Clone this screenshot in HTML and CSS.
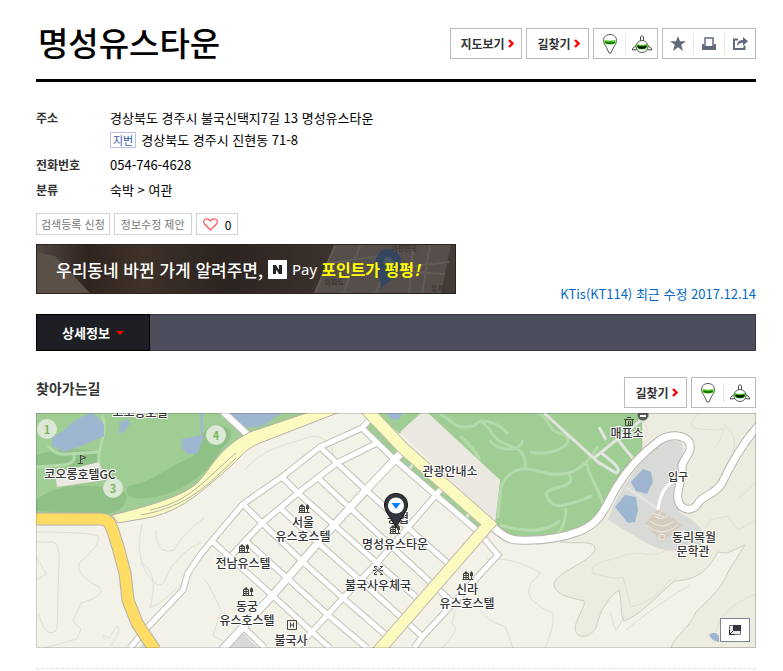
FILE: index.html
```html
<!DOCTYPE html>
<html lang="ko">
<head>
    <meta charset="UTF-8">
    <title>명성유스타운</title>
    <link rel="stylesheet" href="styles.css">
</head>
<body>
    <svg class="sprite" aria-hidden="true">
        <symbol id="arrow" viewBox="0 0 6 9">
            <path d="M1 1l3.5 3.5L1 8" fill="none" stroke="#f00" stroke-width="2.4"/>
        </symbol>
        <symbol id="street" viewBox="0 0 14 20">
            <path d="M7 .5C3 .5.5 3 .5 6.500c0 3 1.700 4.500 3 7L6 19h2l2.500-5.500c1.300-2.500 3-4 3-7C13.500 3 11 .5 7 .5z" fill="#fff" stroke="#555"/>
            <path d="M1.500 6q5.500 1.500 11 0v3.500q-5.500 2-11 0z" fill="#41c413"/>
            <path d="M2.500 8q4.500 1 9 0v1q-4.500 1.500-9 0z" fill="#0a3d05"/>
        </symbol>
        <symbol id="heli" viewBox="0 0 20 18">
            <path d="M8.500 6V2q1.500-3 3 0v4M5 10L.5 13.500V15l5-.5M15 10l4.500 3.500V15l-5-.5" fill="#fff" stroke="#444"/>
            <circle cx="10" cy="11.500" r="6" fill="#fff" stroke="#555"/>
            <path d="M4.500 9q5.500 2 11 0v3q-1 2.500-5.500 2.500t-5.500-2.500z" fill="#41c413"/>
            <path d="M5.500 10.500q4.500 1.500 9 0v1.500q-1 2-4.500 2t-4.500-2z" fill="#021a00"/>
        </symbol>
        <symbol id="hotel" viewBox="0 0 12 10">
            <path d="M.5 9.500h11M1.500 9V3.500h5V9M4 1v8M1.500 5.500h5M1.500 7.500h5M9.500 9V5" fill="none" stroke="#444"/>
            <path d="M2.500 2h3v1.500h-3zM8 3l1.500-2L11 3v3H8z" fill="#444"/>
        </symbol>
    </svg>

    <div class="wrap">
        <header class="head">
            <h1>명성유스타운</h1>
            <div class="actions">
                <button class="btn map-btn">지도보기<svg width="6" height="9"><use href="#arrow"/></svg></button>
                <button class="btn">길찾기<svg width="6" height="9"><use href="#arrow"/></svg></button>
                <div class="group">
                    <button aria-label="거리뷰"><svg width="14" height="20"><use href="#street"/></svg></button>
                    <button aria-label="항공뷰"><svg width="20" height="18"><use href="#heli"/></svg></button>
                </div>
                <div class="group tools">
                    <button aria-label="즐겨찾기">
                        <svg width="16" height="15" viewBox="0 0 16 15"><path d="M8 0l2 5.300h6l-4.800 3.400L13 15l-5-3.700L3 15l1.800-6.300L0 5.300h6z" fill="#62697c"/></svg>
                    </button>
                    <button aria-label="인쇄">
                        <svg width="14" height="13" viewBox="0 0 14 13"><path d="M3 9V1h8v8" fill="#fff" stroke="#62697c" stroke-width="1.500"/><path d="M0 7h2v2h10V7h2v6H0z" fill="#62697c"/></svg>
                    </button>
                    <button aria-label="공유">
                        <svg width="15" height="13" viewBox="0 0 15 13"><path d="M5 2.500H1V12h10.500V8.500" fill="none" stroke="#62697c" stroke-width="2"/><path d="M4 9c0-4 2-6 6-6V0l5 4.300-5 4.200V5.800C7.500 5.700 6 6.500 4 9z" fill="#62697c"/></svg>
                    </button>
                </div>
            </div>
        </header>

        <dl class="info">
            <dt>주소</dt>
            <dd>경상북도 경주시 불국신택지7길 13 명성유스타운<br><span class="jibun">지번</span>경상북도 경주시 진현동 71-8</dd>
            <dt>전화번호</dt>
            <dd>054-746-4628</dd>
            <dt>분류</dt>
            <dd>숙박 &gt; 여관</dd>
        </dl>

        <div class="links">
            <button>검색등록 신청</button>
            <button>정보수정 제안</button>
            <button class="like" aria-label="좋아요 0">
                <svg width="15" height="13" viewBox="0 0 15 13"><path d="M7.500 12L1.500 6C-.5 3 1.500 .8 3.800.8c1.700 0 2.700.7 3.700 2.200C8.500 1.500 9.500.8 11.200.8c2.300 0 4.300 2.200 2.300 5.200z" fill="none" stroke="#f55" stroke-width="1.200"/></svg>
                <span>0</span>
            </button>
        </div>

        <div class="promo">
            <a class="banner" href="#">
                <svg class="banner-bg" viewBox="0 0 420 50" preserveAspectRatio="xMaxYMid slice" aria-hidden="true">
                    <defs>
                        <linearGradient id="wood">
                            <stop offset="0" stop-color="#514740"/>
                            <stop offset=".12" stop-color="#30241f"/>
                            <stop offset=".25" stop-color="#3e3128"/>
                            <stop offset=".45" stop-color="#2c2421"/>
                            <stop offset=".7" stop-color="#3c322e"/>
                            <stop offset="1" stop-color="#443a36"/>
                        </linearGradient>
                    </defs>
                    <path d="M0 0h420v50H0z" fill="url(#wood)"/>
                    <path d="M0 8l18 4 36 38H0z" fill="#5a5048"/>
                    <path d="M300 0h116l-10 50H279z" fill="#564e4b"/>
                    <path d="M300 0l-21 50M290 20l54-8 20 12 50-6M325 0l-17 50M340 50l10-24 60 4M378 0l-4 50M395 0l-8 50" fill="none" stroke="#625a57" stroke-width="2"/>
                    <path d="M353 5a14 14 0 0 1 13 17c-2 9-11 14-20 22 0-10-8-15-6-26 1-8 6-13 13-13z" fill="#34465f"/>
                    <circle cx="353" cy="18" r="5" fill="#4d5663"/>
                    <g class="banner-place">
                        <text x="356" y="7">가전면옥</text>
                        <text x="289" y="41">아파트</text>
                        <text x="396" y="47">유치</text>
                    </g>
                </svg>
                <span>우리동네 바뀐 가게 알려주면,</span>
                <svg class="naver" width="19" height="19" viewBox="0 0 19 19"><path d="M0 0h19v19H0z" fill="#fff"/><path d="M5 14V5h3l3 5V5h3v9h-3L8 9.500V14z" fill="#222"/></svg>
                <span class="pay">Pay</span>
                <strong>포인트가 펑펑<i>!</i></strong>
            </a>
            <a class="updated" href="#">KTis(KT114) 최근 수정 2017.12.14</a>
        </div>

        <nav class="tabs">
            <a href="#">상세정보<span class="caret"></span></a>
        </nav>

        <section>
            <div class="section-head">
                <h2>찾아가는길</h2>
                <div class="actions">
                    <button class="btn">길찾기<svg width="6" height="9"><use href="#arrow"/></svg></button>
                    <div class="group">
                        <button aria-label="거리뷰"><svg width="14" height="20"><use href="#street"/></svg></button>
                        <button aria-label="항공뷰"><svg width="20" height="18"><use href="#heli"/></svg></button>
                    </div>
                </div>
            </div>

            <div class="map">
                <svg class="map-canvas" viewBox="36 413 720 235" preserveAspectRatio="xMidYMid slice">
                    <defs>
                        <g id="streets">
                            <path d="M130 648L145 630 183 590 188 573 200 555 243 504 282 477 320 447 362 428 372 417"/>
                            <path d="M377 443L337 463 298 493 262 523 232 555"/>
                            <path d="M442 488L377 563 343 598 297 648"/>
                            <path d="M482 536L498 555 422 637 414 648"/>
                            <path d="M362 428L395 460 438 497 480 533"/>
                            <path d="M320 447L337 463 366 490 407 527 450 565"/>
                            <path d="M318 478L350 508 403 557 452 602"/>
                            <path d="M282 477L298 493 332 523 377 563 416 597"/>
                            <path d="M280 508L318 543 360 580 423 637"/>
                            <path d="M243 504L262 523 303 562 343 598 387 636"/>
                            <path d="M247 542L287 578 328 615 367 648"/>
                            <path d="M213 542L272 595 312 632 330 648"/>
                            <path d="M243 627L265 648"/>
                        </g>
                        <path id="avenue" d="M402 452L366 490 318 543 272 596 243 627 222 650"/>
                        <path id="hillroad" d="M490 526C498 529 504 540 518 540C540 541 560 539 580 531C602 522 606 505 616 488C628 468 645 451 660 440C670 434 683 434 689 442C694 452 682 460 682 466C684 476 676 490 678 499C680 512 694 512 699 502C704 495 716 494 722 483C732 462 742 444 758 426"/>
                        <path id="highway" d="M30 519H100C112 519 111 527 118 547L125 573 128 600 137 623 155 650"/>
                    </defs>

                    <!-- ground -->
                    <path class="land" d="M36 413h720v235H36z"/>
                    <path class="hill" d="M642 413H756V648H671C674 636 690 628 696 612C710 598 722 588 728 572L745 545 727 553 718 552C706 574 694 580 674 581C654 599 640 615 624 621C620 615 622 600 619 590C608 598 600 610 596 628C588 640 575 638 575 628C577 616 586 606 584 601C570 597 555 596 554 584C555 573 590 562 595 550C595 540 584 544 560 542L600 515 642 458z"/>

                    <!-- contour lines -->
                    <path class="contour" d="M36 532q60 0 63 5q0 10-20 26q-4 12 20 24q8 8-18 16l-8 18 8 8-4 10-36 10M36 542h18q6 4 5 20l-2 68q-12 10-18-16M36 556l10 18-10 6M142 524q-8 38 10 56q10 12 15-5q12-24 34-32M156 530q0 26 18 20q10-18 30-32M140 562q20 10 10 46q18-8 38-32M205 580q6 8 16 30l-8 26 12 6M105 640q-6-8 4-2l8-12q6 0-6 20M245 470q14-20 56-30q20-10 31 8q0 20 30 36"/>
                    <path class="contour" d="M487 559q28-2 54 14q-18 14-10 26q10 10 22 14q2 12-8 35M480 610q10 14 25 16l8 22M593 573q-6-8 20-14q14-6 26-6q24 6 34-10M593 573q25 8 30 4l8 30q22-4 40-28M624 617l-8 14-6-18M690 585q-34 20-64 45M700 413q-26 20 24 16q-4 14-10 20M724 424q16 14 8 30l-10 20M738 498q20-14 18-22M700 540l10-20 18-4 10 14 18-10M715 640q0-30 41-46M640 413q10 18 6 24M442 648q20-20 10-24l3-14"/>

                    <!-- golf course -->
                    <path class="green" d="M36 413H330L250 441 222 465C198 492 178 496 150 507L118 516 36 514z"/>
                    <path class="green-dark" d="M36 500C65 478 100 486 125 492C130 506 118 514 98 514L36 511zM128 486C150 484 168 466 190 458C204 452 196 428 216 425C236 426 234 438 222 448C200 486 165 500 134 498C126 496 126 490 128 486zM36 455C60 448 80 448 98 452L100 464 84 466 36 468z"/>
                    <path class="path-light" d="M102 415C110 432 96 446 99 465M48 446q8 10 20 8l32-2M36 467l28-2q12-2 10-10"/>
                    <path class="water" d="M76 420L92 412 104 424 104 436 86 444 64 452 52 446 52 438 64 430zM120 422l8-3 2 5-6 8-5 1zM200 413h3l0 27-6 14-10 0-6-7 1-8 19-4zM228 413H282L262 426 244 428z"/>
                    <path class="plaza" d="M55 473L99 462 105 480 57 487z"/>
                    <path class="walk-edge" d="M218 407L250 437"/>
                    <path class="walk" d="M218 407L250 437"/>

                    <!-- parks and car park -->
                    <path class="green" d="M369 421L487 526 478 531 365 430zM374 413H422L400 434zM426 413H642V458C622 480 610 508 595 520C570 538 540 540 515 538L494 524 500 480z"/>
                    <path class="water" d="M386 413h17l-4 6-6 1z"/>
                    <path class="plaza" d="M421 413H428L500 480 495 524 400 432z"/>
                    <path class="path-light" d="M498 518C500 490 500 480 512 473C528 462 540 476 560 474C578 474 590 460 598 446M525 468C528 440 500 452 490 430L480 420M440 414C456 422 452 430 474 426C482 416 500 424 508 434M490 440C498 454 525 450 522 440M530 452C556 458 580 440 562 434C546 430 552 420 538 413M587 464C590 480 600 490 603 504M568 472C580 490 550 484 546 494C552 514 570 504 592 496M566 508C566 520 562 530 556 536M460 436q14 12 20 24M500 525q40 12 60-4"/>
                    <path class="lane" d="M544 413L598 462 616 473C622 470 616 464 600 452M594 458L650 413M599 427L606 440M618 440L636 462M409 469l5-6M465 519l5-6"/>

                    <!-- museum grounds -->
                    <path class="grounds" d="M682 443C672 436 660 442 648 456C632 472 616 496 608 520L646 543C664 552 690 556 702 544C706 530 698 522 680 513C672 500 680 476 684 462z"/>
                    <path class="water" d="M631 482L643 469 651 472 653 482 647 494 636 491zM615 507L625 495 636 497 638 510 635 522 628 523z"/>
                    <path class="museum" d="M658 508L682 525 662 542 645 524z"/>
                    <path class="museum-steps" d="M650 521q12 10 24 0M646 525q16 14 32 0M654 516q6 5 14 0M652 513l12 4M662 510l-6 8"/>
                    <circle class="museum-steps" cx="662" cy="537" r="3"/>
                    <path class="lane" d="M626 487L658 509"/>
                    <path class="walk thin" d="M658 510Q660 490 672 482"/>
                    <path class="water" d="M709 635q6-5 10 1v6q-6 0-10-7z"/>
                    <path class="grounds" d="M243 633L258 648H228zM140 648l4-8 6 8z"/>

                    <!-- streets -->
                    <use class="street-edge" href="#streets"/>
                    <use class="avenue-edge" href="#avenue"/>
                    <use class="street" href="#streets"/>
                    <use class="avenue" href="#avenue"/>
                    <use class="hill-edge" href="#hillroad"/>
                    <use class="hill-road" href="#hillroad"/>

                    <!-- main roads -->
                    <path class="main" d="M112 515C150 506 185 495 197 483C212 468 218 448 250 432L330 405 345 410 260 443C245 449 240 458 230 467L203 490C190 501 170 514 147 518L118 523z"/>
                    <path class="main-lane" d="M150 510C190 502 204 480 236 453M141 515C190 506 208 484 236 458"/>
                    <path class="trunk-edge" d="M364 407L403 448 489 524 374 656"/>
                    <path class="trunk" d="M364 407L403 448 489 524 374 656"/>
                    <use class="highway-edge" href="#highway"/>
                    <use class="highway" href="#highway"/>

                    <!-- golf holes -->
                    <g class="hole">
                        <circle cx="47" cy="429" r="10"/><text x="47" y="434">1</text>
                        <circle cx="216" cy="435" r="10"/><text x="216" y="440">4</text>
                        <circle cx="113" cy="488" r="10"/><text x="113" y="493">3</text>
                    </g>

                    <!-- place icons -->
                    <use href="#hotel" x="298" y="503" width="12" height="10"/>
                    <use href="#hotel" x="238" y="543" width="12" height="10"/>
                    <use href="#hotel" x="242" y="586" width="12" height="10"/>
                    <use href="#hotel" x="462" y="570" width="12" height="10"/>
                    <use href="#hotel" x="389" y="524" width="12" height="10"/>
                    <path class="mark" d="M80.500 463v-8M81 455.500l5 2-5 2M78 463.500h5M374 567l8 7M382 567l-8 7M374 566.500h3M380 566.500h3M374 574.500h3M380 574.500h3M373 570.500h3M380 570.500h3M287.500 620.500h9v9h-9zM290.500 622.500v5M293.500 622.500v5M290.500 625h3M624 419.500h10M625.500 420v5.500h7V420M627 417.500h4M628.500 421v4M630.500 421v4"/>
                    <circle cx="643" cy="415" r="5.500" fill="#555f57"/>
                    <path d="M640 416h6" stroke="#fff" stroke-width="2"/>

                    <g class="place">
                        <text x="140" y="417">코오롱호텔</text>
                        <text x="80" y="479">코오롱호텔GC</text>
                        <text x="627" y="438">매표소</text>
                        <text x="450" y="476">관광안내소</text>
                        <text x="678" y="481" class="small">입구</text>
                        <text x="694" y="542">동리목월</text>
                        <text x="693" y="556">문학관</text>
                        <text x="303" y="527">서울</text>
                        <text x="303" y="541">유스호스텔</text>
                        <text x="243" y="568">전남유스텔</text>
                        <text x="247" y="611">동궁</text>
                        <text x="247" y="625">유스호스텔</text>
                        <text x="291" y="645">불국사</text>
                        <text x="378" y="590">불국사우체국</text>
                        <text x="467" y="594">신라</text>
                        <text x="467" y="608">유스호스텔</text>
                        <text x="398" y="523">농협</text>
                        <text x="395" y="549">명성유스타운</text>
                    </g>

                    <!-- marker -->
                    <path d="M396 493.500c-7 0-11.500 5-11.500 11.500 0 7 7 13 11.500 23 4.500-10 11.500-16 11.500-23 0-6.500-4.500-11.500-11.500-11.500z" fill="#33373b" stroke="#111"/>
                    <circle cx="396" cy="505.500" r="8" fill="#fff"/>
                    <path d="M391.500 503h9l-4.500 6z" fill="#0b80ff"/>
                </svg>
                <button class="map-toggle" aria-label="미니맵">
                    <svg width="12" height="10" viewBox="0 0 12 10"><path d="M.5.5h11v9H.5z" fill="#e8eaee" stroke="#777d88"/><path d="M4 0h8v6H4z" fill="#33363d"/><path d="M.5 5v4.500h5M1 9l3-3" fill="none" stroke="#222"/></svg>
                </button>
            </div>
        </section>
    </div>
</body>
</html>
```

FILE: styles.css
```css
* {
    box-sizing: border-box;
}
body {
    margin: 0;
    background: #fff;
    color: #000;
    font-family: "Noto Sans CJK KR", sans-serif;
    font-size: 13px;
}
button {
    margin: 0;
    padding: 0;
    border: none;
    background: none;
    color: inherit;
    font-family: inherit;
    cursor: pointer;
}
a {
    text-decoration: none;
}
.sprite {
    position: absolute;
    width: 0;
    height: 0;
}
.wrap {
    margin: 0 27px 0 36px;
}

/* title */
.head {
    display: flex;
    justify-content: space-between;
    padding: 28px 0 20px;
    border-bottom: 3px solid #000;
}
h1 {
    margin: 0 0 0 2px;
    font-size: 33px;
    font-weight: 500;
    line-height: 28px;
}
.actions {
    display: flex;
    gap: 4px;
}
.btn, .group {
    display: flex;
    align-items: center;
    justify-content: center;
    width: 63px;
    height: 31px;
    border: 1px solid #bbb;
    background: #fff;
}
.btn {
    gap: 3px;
    padding-left: 2px;
    color: #333;
    font-size: 12px;
    font-weight: bold;
}
.map-btn {
    width: 72px;
}
.group {
    width: 65px;
}
.tools {
    width: 94px;
}
.group button {
    display: flex;
    flex: 1;
    align-items: center;
    justify-content: center;
    height: 20px;
}
.group button + button {
    border-left: 1px solid #e8e8e8;
}

/* place info */
.info {
    display: grid;
    grid-template-columns: 74px 1fr;
    row-gap: 3px;
    margin: 25px 0 12px;
    line-height: 22px;
}
.info dt {
    color: #333;
    font-size: 12px;
    font-weight: bold;
}
.info dd {
    margin: 0;
}
.jibun {
    display: inline-block;
    margin-right: 5px;
    padding: 0 2px;
    border: 1px solid #b4c1e0;
    color: #3a5ba8;
    font-size: 11px;
    line-height: 14px;
}
.links {
    display: flex;
    gap: 4px;
    margin-bottom: 9px;
}
.links button {
    display: flex;
    align-items: center;
    height: 22px;
    padding: 0 4px;
    border: 1px solid #d2d2d2;
    color: #777;
    font-size: 11px;
}
.links button + button {
    padding: 0 6px;
}
.links .like {
    gap: 7px;
    color: #000;
    font-size: 12px;
}

/* banner */
.promo {
    display: flex;
    align-items: flex-start;
    justify-content: space-between;
}
.banner {
    position: relative;
    display: flex;
    align-items: center;
    width: 420px;
    height: 50px;
    padding-left: 20px;
    color: #fff;
    font-size: 17px;
    font-weight: 500;
    white-space: nowrap;
}
.banner span, .banner strong, .naver {
    position: relative;
}
.banner-bg {
    position: absolute;
    top: 0;
    left: 0;
    width: 100%;
    height: 100%;
    border: 1px solid #282321;
}
.banner-place {
    fill: #36302d;
    font-size: 7px;
}
.naver {
    margin: 0 5px;
}
.banner .pay {
    margin-right: 4px;
    font-family: "Noto Sans", sans-serif;
    font-size: 15px;
    font-weight: normal;
}
.banner strong {
    color: #ff0;
    font-size: 16px;
}
.updated {
    margin-top: 42px;
    color: #0468c6;
    font-size: 13px;
    line-height: 16px;
}

/* tabs */
.tabs {
    display: flex;
    height: 37px;
    margin-top: 20px;
    border: 1px solid #363843;
    background: #4b4d5a;
}
.promo {
    height: 50px;
}
.tabs a {
    display: flex;
    align-items: center;
    justify-content: center;
    gap: 6px;
    width: 114px;
    margin: -1px;
    border: 1px solid #000;
    background: #1e1f24;
    color: #fff;
    font-weight: bold;
}
.caret {
    border: 4px solid transparent;
    border-top-color: #f00;
    border-bottom: 0;
}

/* directions */
.section-head {
    display: flex;
    justify-content: space-between;
    padding: 26px 0 5px;
}
h2 {
    margin: 0;
    color: #333;
    font-size: 14px;
    line-height: 22px;
}
section {
    padding-bottom: 20px;
    border-bottom: 1px dashed #ddd;
}
.map {
    position: relative;
    height: 235px;
}
.map::after {
    content: "";
    position: absolute;
    inset: 0;
    border: 1px solid rgba(0, 0, 0, 0.15);
    pointer-events: none;
}
.map-canvas {
    display: block;
    width: 100%;
    height: 100%;
}
.map-toggle {
    position: absolute;
    right: 6px;
    bottom: 6px;
    display: flex;
    align-items: center;
    justify-content: center;
    width: 30px;
    height: 24px;
    border: 1px solid #7d8594;
    background: #fff;
}

/* map layers */
.land { fill: #f2f2e9; }
.hill { fill: #ecece0; stroke: #cfcfc0; }
.green { fill: #9fcd94; }
.green-dark { fill: #8fc086; }
.water { fill: #9fb6d0; }
.plaza { fill: #ebe8e1; }
.grounds { fill: #d8dad7; }
.museum { fill: #d5ccbe; }
.contour, .path-light, .lane, .walk, .walk-edge, .museum-steps, .mark,
.main-lane, .trunk, .trunk-edge,
.street, .street-edge, .avenue, .avenue-edge,
.hill-road, .hill-edge, .highway, .highway-edge {
    fill: none;
}
.contour { stroke: #dfdfd2; }
.path-light { stroke: #b4d9ab; stroke-width: 3px; }
.lane { stroke: #e2e4df; stroke-width: 3px; }
.museum-steps { stroke: #eee9e0; }
.walk { stroke: #fff; stroke-width: 6px; }
.walk.thin { stroke-width: 3px; }
.walk-edge { stroke: #bbb; stroke-width: 8px; }
.street { stroke: #fff; stroke-width: 5px; }
.street-edge { stroke: #c4bfbb; stroke-width: 7px; }
.avenue { stroke: #fff; stroke-width: 7px; }
.avenue-edge { stroke: #c4bfbb; stroke-width: 9px; }
.hill-road { stroke: #fff; stroke-width: 7px; }
.hill-edge { stroke: #bbb6b0; stroke-width: 9px; }
.main { fill: #fdfabf; stroke: #b5b2ac; }
.main-lane { stroke: #b5b2ac; }
.trunk { stroke: #fdfabf; stroke-width: 11px; }
.trunk-edge { stroke: #c3bfae; stroke-width: 13px; }
.highway { stroke: #ffdc64; stroke-width: 11px; }
.highway-edge { stroke: #b5b2ac; stroke-width: 13px; }
.mark { stroke: #444; }
.hole circle { fill: #dce8d6; }
.hole text {
    fill: #7db55c;
    font-size: 11px;
    font-weight: bold;
    text-anchor: middle;
}
.place text {
    fill: #333;
    stroke: #fff;
    stroke-width: 2px;
    stroke-linejoin: round;
    paint-order: stroke;
    font-size: 12px;
    font-weight: 500;
    text-anchor: middle;
}
.place .small {
    font-size: 11px;
}
```
